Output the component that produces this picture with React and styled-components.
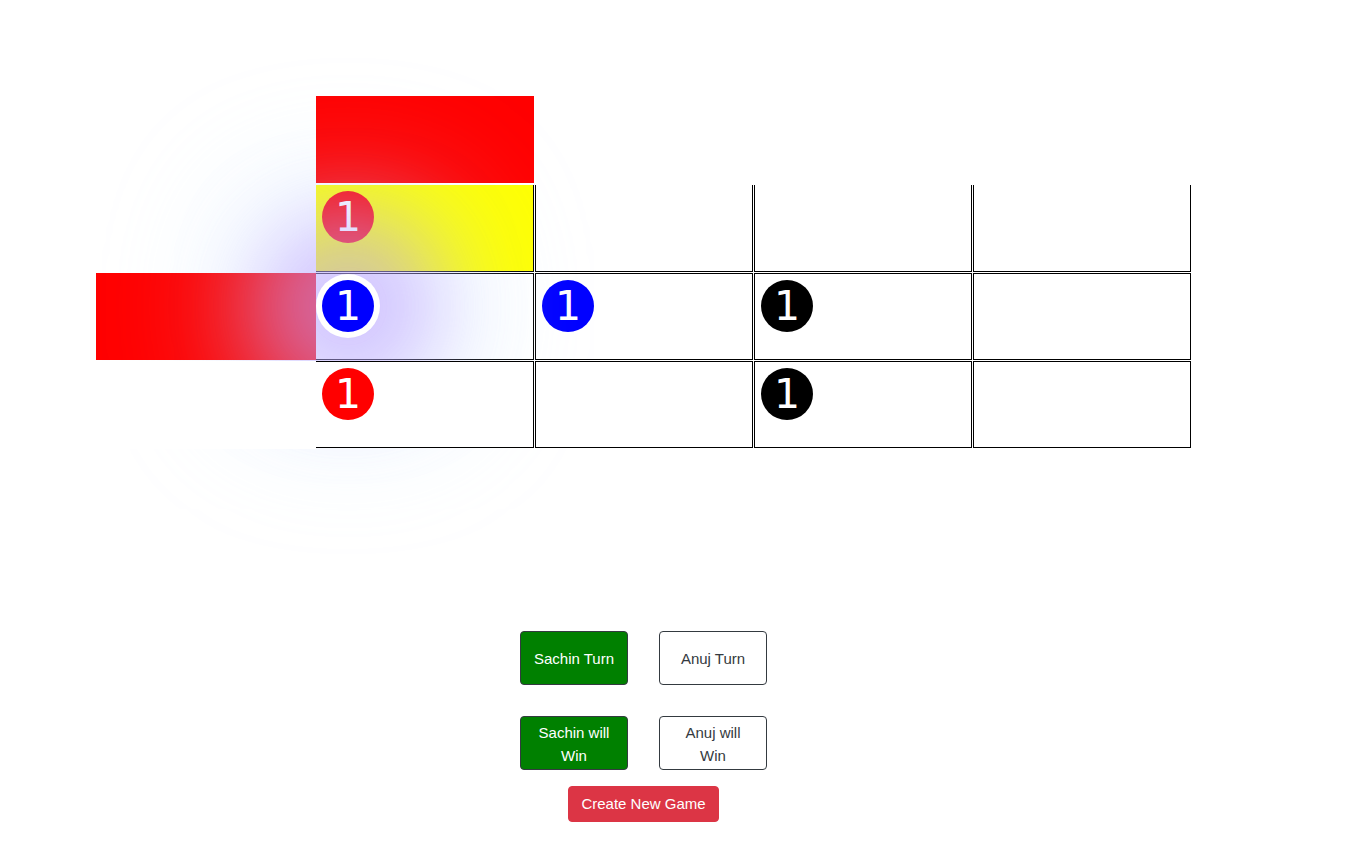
import styled, { createGlobalStyle, css } from 'styled-components';

const GlobalStyle = createGlobalStyle`
  body {
    margin: 0;
    background: #fff;
    font-family: "Liberation Sans", Arial, sans-serif;
  }
`;

const board = [
  [{ bg: '#ff0', token: 'red' }, {}, {}, {}],
  [{ token: 'blue', selected: true }, { token: 'blue' }, { token: 'black' }, {}],
  [{ token: 'red' }, {}, { token: 'black' }, {}],
];

const App = () => {
  return (
    <Page>
      <GlobalStyle />
      <BoardWrap>
        <Board>
          <Spacer />
          <Path $w={218} />
          <Spacer />
          <Spacer />
          <Spacer />

          {board.map((row, r) => (
            <Row key={r} r={r} cells={row} />
          ))}
        </Board>
      </BoardWrap>

      <Controls>
        <ButtonRow>
          <PlayerButton $active>Sachin Turn</PlayerButton>
          <PlayerButton>Anuj Turn</PlayerButton>
        </ButtonRow>
        <ButtonRow $last>
          <PlayerButton $active>Sachin will Win</PlayerButton>
          <PlayerButton>Anuj will Win</PlayerButton>
        </ButtonRow>
        <NewGameButton>Create New Game</NewGameButton>
      </Controls>
    </Page>
  );
};

const Row = ({ r, cells }) => (
  <>
    {r === 1 ? <Path $w={220} /> : r === 2 ? <Blank /> : <Spacer />}
    {cells.map((cell, c) => (
      <Cell key={c} $first={c === 0} $top={r === 0} $raised={r === 2} $bg={cell.bg}>
        {cell.token && (
          <Token $color={cell.token} $selected={cell.selected}>
            1
          </Token>
        )}
      </Cell>
    ))}
  </>
);

const Page = styled.div`
  min-height: 868px;
`;

const BoardWrap = styled.div`
  padding: 96px 0 0 96px;
`;

const Board = styled.div`
  display: grid;
  grid-template-columns: 220px repeat(4, 219px);
  grid-template-rows: 89px repeat(3, 88px);
  width: max-content;
`;

const Spacer = styled.div``;

const Path = styled.div`
  width: ${(p) => p.$w}px;
  height: 87px;
  background: #f00;
`;

const Blank = styled.div`
  position: relative;
  z-index: 2;
  width: 220px;
  height: 88px;
  background: #fff;
`;

const Cell = styled.div`
  box-sizing: border-box;
  width: 218px;
  height: 87px;
  border: 1px solid #000;
  border-left: ${(p) => (p.$first ? 'none' : '1px solid #000')};
  border-top: ${(p) => (p.$top ? 'none' : '1px solid #000')};
  background: ${(p) => p.$bg || '#fff'};
  ${(p) =>
    p.$raised &&
    css`
      position: relative;
      z-index: 2;
    `}
`;

const Token = styled.div`
  width: 52px;
  height: 52px;
  margin: 6px;
  border-radius: 50%;
  background: ${(p) => p.$color};
  color: #fff;
  font: 41px/52px "DejaVu Sans", sans-serif;
  text-align: center;
  ${(p) =>
    p.$selected &&
    css`
      position: relative;
      z-index: 1;
      box-shadow: 0 0 0 6px #fff, 0 0 80px 60px rgba(185, 150, 255, 0.5),
        0 0 120px 100px rgba(190, 225, 255, 0.28);
    `}
`;

const Controls = styled.div`
  width: 1287px;
  margin-top: 182px;
  display: flex;
  flex-direction: column;
  align-items: center;
`;

const ButtonRow = styled.div`
  display: flex;
  gap: 31px;
  margin-bottom: ${(p) => (p.$last ? '16px' : '31px')};
`;

const PlayerButton = styled.button`
  box-sizing: border-box;
  width: 108px;
  height: 54px;
  padding: 1px 12px 0;
  border: 1px solid #343a40;
  border-radius: 4px;
  background: ${(p) => (p.$active ? '#008000' : '#fff')};
  color: ${(p) => (p.$active ? '#fff' : '#343a40')};
  font: 15px/23px "Liberation Sans", Arial, sans-serif;
  text-align: center;
`;

const NewGameButton = styled.button`
  box-sizing: border-box;
  height: 36px;
  padding: 6px 12px;
  border: 1px solid #dc3545;
  border-radius: 4px;
  background: #dc3545;
  color: #fff;
  font: 15px/22px "Liberation Sans", Arial, sans-serif;
`;

export default App;
